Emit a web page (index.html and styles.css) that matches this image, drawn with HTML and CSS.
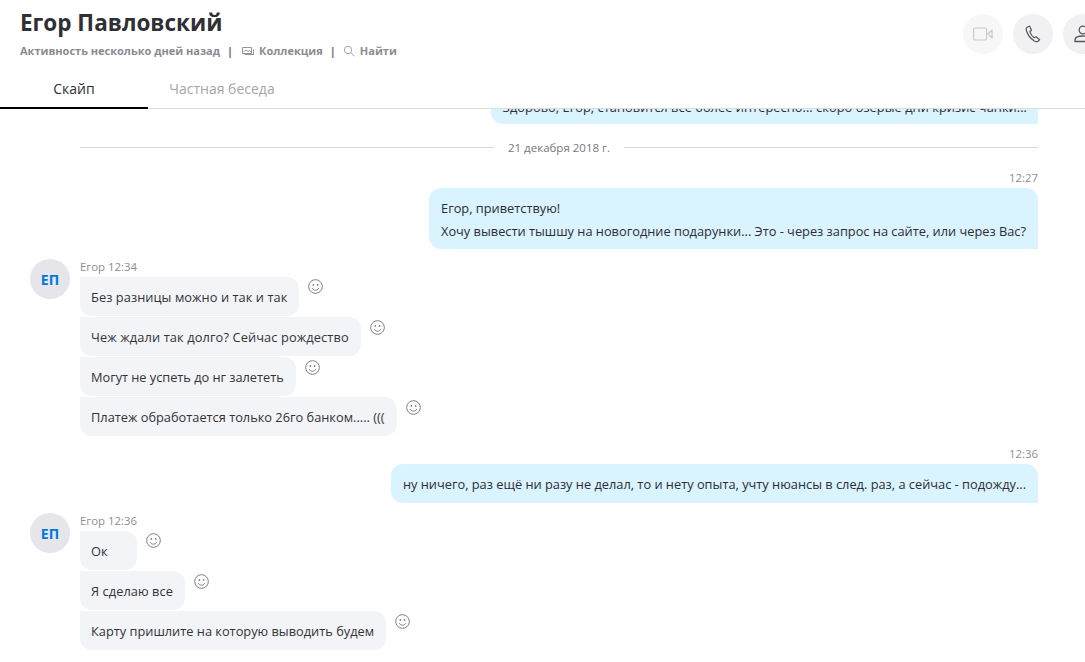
FILE: index.html
```html
<!DOCTYPE html>
<html lang="ru">
<head>
<meta charset="utf-8">
<title>Егор Павловский</title>
<link rel="stylesheet" href="styles.css">
</head>
<body>
<svg class="defs" width="0" height="0" aria-hidden="true">
  <symbol id="smile" viewBox="0 0 16 16">
    <circle cx="8" cy="8" r="7.300" fill="none" stroke="currentColor" stroke-width="1"/>
    <circle cx="5.700" cy="6.300" r=".9" fill="currentColor"/>
    <circle cx="10.300" cy="6.300" r=".9" fill="currentColor"/>
    <path d="M4.500 9.800c.8 1.400 2 2.100 3.500 2.100s2.700-.7 3.500-2.100" fill="none" stroke="currentColor"/>
  </symbol>
</svg>
<div class="app">
  <header class="head">
    <div class="who">
      <h1 class="name">Егор Павловский</h1>
      <div class="sub">
        <span>Активность несколько дней назад</span><span class="bar">|</span>
        <svg class="gallery" viewBox="0 0 12 10"><path d="M.5 1.500h9v6h-9zM2.500 8.500h9v-5M1.500 6l2.500-2 2 1.500 1.500-1 1.500 1.500" fill="none" stroke="currentColor" stroke-width=".9"/></svg>
        <span>Коллекция</span><span class="bar">|</span>
        <svg class="search" viewBox="0 0 12 12"><circle cx="5" cy="5" r="3.700" fill="none" stroke="currentColor"/><path d="M7.800 7.800l3.500 3.500" stroke="currentColor"/></svg>
        <span>Найти</span>
      </div>
    </div>
    <div class="actions">
      <div class="round dim"><svg viewBox="0 0 20 14" class="ic-video"><rect x=".6" y="1" width="13" height="12" rx="1.500" fill="none" stroke="currentColor" stroke-width="1.200"/><path d="M15 7l4-3.800v7.600z" fill="none" stroke="currentColor" stroke-width="1.200"/></svg></div>
      <div class="round"><svg viewBox="0 0 16 18" class="ic-phone"><path d="M4.500 1L2 2.200c-1 .6-1 1.700-.7 2.800 1.200 4.500 4 8.500 8 11 1.300.7 2.600 1 3.700.2l1.600-1.500-3.600-3-2 1c-2-1.400-3.500-3.700-4.200-6l1.700-1.400z" fill="none" stroke="currentColor" stroke-width="1.200" stroke-linejoin="round"/></svg></div>
      <div class="round"><svg viewBox="0 0 18 18" class="ic-user"><circle cx="9" cy="5" r="3.800" fill="none" stroke="currentColor" stroke-width="1.300"/><path d="M1 16.500v-1.500c0-2.500 3-4 8-4s8 1.500 8 4v1.500z" fill="none" stroke="currentColor" stroke-width="1.300"/></svg></div>
    </div>
  </header>
  <nav class="tabs">
    <div class="tab on">Скайп</div>
    <div class="tab">Частная беседа</div>
  </nav>
  <main class="feed">
    <div class="cut-wrap"><div class="mine cut">Здорово, Егор, становится всё более интересно... скоро озёрые дни кризис чанки...</div></div>

    <div class="day"><span>21 декабря 2018 г.</span></div>

    <section class="out first">
      <time class="stamp">12:27</time>
      <div class="mine two">Егор, приветствую!<br>Хочу вывести тышшу на новогодние подарунки... Это - через запрос на сайте, или через Вас?</div>
    </section>

    <section class="in">
      <div class="ava">ЕП</div>
      <div class="msgs">
        <div class="meta">Егор 12:34</div>
        <div class="row"><div class="theirs slight">Без разницы можно и так и так</div><svg class="sm"><use href="#smile"/></svg></div>
        <div class="row"><div class="theirs wide">Чеж ждали так долго? Сейчас рождество</div><svg class="sm"><use href="#smile"/></svg></div>
        <div class="row"><div class="theirs tight">Могут не успеть до нг залететь</div><svg class="sm"><use href="#smile"/></svg></div>
        <div class="row"><div class="theirs">Платеж обработается только 26го банком..... (((</div><svg class="sm"><use href="#smile"/></svg></div>
      </div>
    </section>

    <section class="out second">
      <time class="stamp">12:36</time>
      <div class="mine">ну ничего, раз ещё ни разу не делал, то и нету опыта, учту нюансы в след. раз, а сейчас - подожду...</div>
    </section>

    <section class="in">
      <div class="ava">ЕП</div>
      <div class="msgs">
        <div class="meta">Егор 12:36</div>
        <div class="row"><div class="theirs">Ок</div><svg class="sm"><use href="#smile"/></svg></div>
        <div class="row"><div class="theirs slight">Я сделаю все</div><svg class="sm"><use href="#smile"/></svg></div>
        <div class="row"><div class="theirs">Карту пришлите на которую выводить будем</div><svg class="sm"><use href="#smile"/></svg></div>
      </div>
    </section>
  </main>
</div>
</body>
</html>
```
FILE: styles.css
```css
* { box-sizing: border-box; }
html, body { margin: 0; height: 100%; background: #fff; overflow: hidden; }
body { font-family: "Open Sans", "Noto Sans", sans-serif; color: #2d2d33; }
.defs { position: absolute; }
.app { width: 1085px; height: 662px; overflow: hidden; display: flex; flex-direction: column; }

.head { height: 70px; flex: none; display: flex; justify-content: space-between; padding: 13px 0 0 20px; overflow: hidden; }
.name { margin: 0; font-size: 22.500px; line-height: 20px; font-weight: 700; color: #2f3036; height: 20px; }
.sub { margin-top: 8px; display: flex; align-items: center; font-size: 11px; line-height: 20px; font-weight: 700; color: #8b8b90; }
.bar { margin: 0 7px; color: #66666c; }
.bar:nth-of-type(2) { margin-right: 9px; }
.gallery { width: 12px; height: 10px; margin-right: 5px; }
.search { width: 12px; height: 12px; margin-right: 5px; color: #a8a8ac; }
.actions { display: flex; gap: 10px; width: 122px; flex: none; padding-top: 1px; }
.round { width: 40px; height: 40px; flex: none; border-radius: 50%; background: #f1f1f3; display: flex; align-items: center; justify-content: center; color: #55555c; }
.round.dim { background: #f7f7f8; color: #c9c9cd; }
.ic-video { width: 20px; height: 14px; }
.ic-phone { width: 16px; height: 18px; }
.ic-user { width: 18px; height: 18px; }

.tabs { height: 39px; flex: none; display: flex; border-bottom: 1px solid #dcdcdc; }
.tab { width: 148px; text-align: center; font-size: 14px; line-height: 37px; color: #a5a5a9; height: 39px; }
.tab.on { color: #2d2d33; border-bottom: 2px solid #000; }
.tab:nth-child(2) { width: 140px; margin-left: 4px; }

.feed { flex: 1; min-height: 0; overflow: hidden; padding-right: 47px; }
.cut-wrap { height: 15px; overflow: hidden; display: flex; justify-content: flex-end; align-items: flex-end; }
.mine { background: #d9f3ff; border-radius: 12px 12px 0 12px; padding: 0 12px; line-height: 41px; height: 39px; font-size: 12.800px; color: #2d2d33; white-space: nowrap; }
.cut { flex: none; padding: 0 11px; line-height: 45px; letter-spacing: .04px; }
.mine.two { height: 61px; line-height: 23px; padding-top: 9px; }

.day { margin: 15px 0 0 80px; height: 16px; display: flex; align-items: center; gap: 14px; font-size: 11.500px; color: #77777c; }
.day::before, .day::after { content: ""; flex: 1; height: 1px; background: #d6d6d9; }

.out { display: flex; flex-direction: column; align-items: flex-end; }
.first { margin-top: 17px; }
.second { margin-top: 12px; }
.stamp { font-size: 11.400px; line-height: 12px; height: 16px; color: #8e8e93; }

.in { display: flex; padding-left: 30px; margin-top: 10px; }
.ava { width: 40px; height: 40px; flex: none; margin-right: 10px; border-radius: 50%; background: #e6e6ea; color: #0078d4; font-size: 14px; font-weight: 700; line-height: 42px; text-align: center; }
.msgs { display: flex; flex-direction: column; gap: 1px; }
.meta { font-size: 11.400px; line-height: 16px; height: 17px; color: #8e8e93; }
.row { display: flex; align-items: flex-start; height: 39px; }
.theirs { min-width: 57px; background: #f2f4f7; border-radius: 0 12px 12px 12px; padding: 0 12px 0 11px; line-height: 41px; height: 39px; font-size: 12.800px; color: #333338; white-space: nowrap; }
.wide { letter-spacing: .12px; }
.slight { letter-spacing: .07px; }
.tight { letter-spacing: -.03px; }
.sm { width: 15px; height: 15px; margin: 3px 0 0 9px; color: #77777c; flex: none; }
.meta + .row .sm { margin-top: 2px; }
```
